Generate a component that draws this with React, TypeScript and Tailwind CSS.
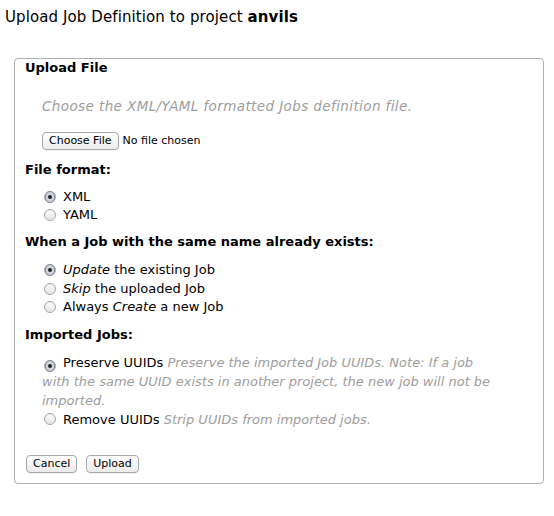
import React from "react";

const font = { fontFamily: '"DejaVu Sans", Verdana, sans-serif' };
const btnFont = { fontFamily: '"DejaVu Sans", "Lucida Grande", sans-serif' };

function Radio({ checked }: { checked?: boolean }) {
  return (
    <span className="inline-flex w-[12px] h-[12px] shrink-0 rounded-full border border-[#a6a6a6] bg-[linear-gradient(#ffffff,#e4e4e4)] items-center justify-center ml-[2px] mr-[7px] shadow-[inset_0_1px_1px_rgba(0,0,0,0.08)]">
      {checked ? (
        <span className="w-[12px] h-[12px] rounded-full border border-[#8a8f99] bg-[radial-gradient(circle,#dfe6f0,#b9c2cf)] flex items-center justify-center">
          <span className="w-[4px] h-[4px] rounded-full bg-[#222]" />
        </span>
      ) : null}
    </span>
  );
}

function Btn({ children }: { children: React.ReactNode }) {
  return (
    <button
      className="h-[18px] px-[6px] rounded-[4px] border border-[#a9a9a9] bg-[linear-gradient(#ffffff,#ececec)] text-[11px] leading-[16px] text-black shadow-[0_1px_0_rgba(0,0,0,0.05)]"
      style={btnFont}
    >
      {children}
    </button>
  );
}

export default function App() {
  return (
    <div className="w-[554px] h-[516px] bg-white text-black text-[13px]" style={font}>
      <div className="pt-[8px] pl-[5px] text-[15px] leading-[18px] tracking-[0.1px]">
        Upload Job Definition to project <b>anvils</b>
      </div>
      <div className="mt-[32px] ml-[14px] w-[530px] border border-[#b0b0b0] rounded-[4px] pl-[10px] pr-[20px] pb-[10px] leading-[18px]">
        <div className="font-bold">Upload File</div>
        <div className="mt-[20px] ml-[17px] italic text-[#9d9d9d] text-[13.5px] tracking-[0.4px]">
          Choose the XML/YAML formatted Jobs definition file.
        </div>
        <div className="mt-[17px] ml-[17px] flex items-center h-[18px]">
          <Btn>Choose File</Btn>
          <span className="ml-[4px] text-[11px]" style={btnFont}>
            No file chosen
          </span>
        </div>

        <div className="mt-[11px] font-bold">File format:</div>
        <div className="mt-[9px] ml-[17px]">
          <div className="flex items-center h-[18px]"><Radio checked />XML</div>
          <div className="flex items-center h-[18px]"><Radio />YAML</div>
        </div>

        <div className="mt-[9px] font-bold">When a Job with the same name already exists:</div>
        <div className="mt-[10px] ml-[17px]">
          <div className="flex items-center h-[18.5px]"><Radio checked /><span><i>Update</i> the existing Job</span></div>
          <div className="flex items-center h-[18.5px]"><Radio /><span><i>Skip</i> the uploaded Job</span></div>
          <div className="flex items-center h-[18.5px]"><Radio /><span>Always <i>Create</i> a new Job</span></div>
        </div>

        <div className="mt-[9px] font-bold">Imported Jobs:</div>
        <div className="mt-[9px] ml-[17px] w-[458px] leading-[19px]">
          <div>
            <span className="inline-flex align-[-1px]"><Radio checked /></span>
            <span>Preserve UUIDs </span>
            <i className="text-[#9d9d9d]">
              Preserve the imported Job UUIDs. Note: If a job with the same UUID exists in another project, the new job will not be imported.
            </i>
          </div>
          <div>
            <span className="inline-flex align-[-1px]"><Radio /></span>
            <span>Remove UUIDs </span>
            <i className="text-[#9d9d9d]">Strip UUIDs from imported jobs.</i>
          </div>
        </div>

        <div className="mt-[26px] flex gap-[9px] ml-[1px]">
          <Btn>Cancel</Btn>
          <Btn>Upload</Btn>
        </div>
      </div>
    </div>
  );
}
